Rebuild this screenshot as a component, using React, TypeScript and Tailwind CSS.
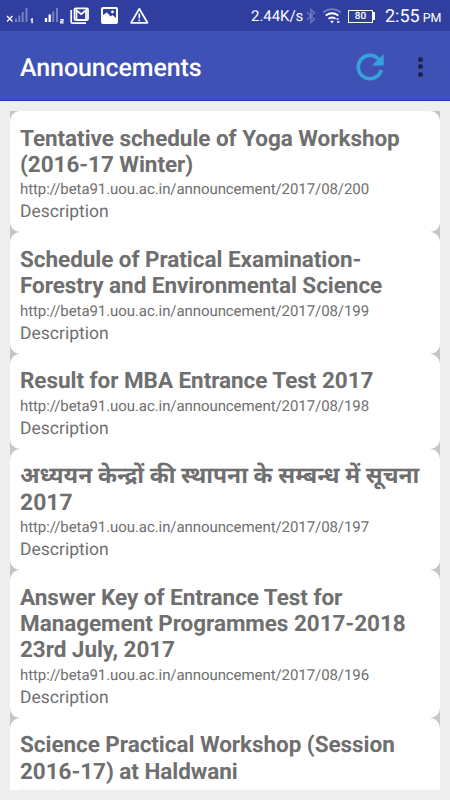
const announcements = [
  { id: 200, lines: ['Tentative schedule of Yoga Workshop', '(2016-17 Winter)'] },
  { id: 199, lines: ['Schedule of Pratical Examination-', 'Forestry and Environmental Science'] },
  { id: 198, lines: ['Result for MBA Entrance Test 2017'] },
  { id: 197, hindi: true, lines: ['अध्ययन केन्द्रों की स्थापना के सम्बन्ध में सूचना', '2017'] },
  { id: 196, lines: ['Answer Key of Entrance Test for', 'Management Programmes 2017-2018', '23rd July, 2017'] },
  { id: 195, lines: ['Science Practical Workshop (Session', '2016-17) at Haldwani'] },
]

function StatusIcons() {
  return (
    <svg width="150" height="31" viewBox="0 0 150 31" fill="none">
      <path d="M7 16l5.500 5.500M12.500 16L7 21.500" stroke="#fff" strokeWidth="1.300" />
      <path d="M16 18.500v3.500M19.300 15.500v6.500M22.700 12v10M26.500 8v14" stroke="#7680c3" strokeWidth="2" />
      <path d="M30.800 19.800l1.300-.8v4.200" stroke="#fff" strokeWidth="1.400" />
      <path d="M46 18v4M49.700 14.500v7.500" stroke="#fff" strokeWidth="2.300" />
      <path d="M53.200 11.500v10.500M57 8v14" stroke="#7680c3" strokeWidth="2" />
      <path d="M60.300 19.500h2.700v1.600h-2.300v1.700h2.900" stroke="#fff" strokeWidth="1.200" />
      <rect x="74.500" y="8.300" width="13.500" height="11.700" rx="1.200" stroke="#fff" strokeWidth="1.800" />
      <path d="M75.500 9.500l5.700 4.700 5.800-4.700M76.500 9.500v10M86 9.500v10" stroke="#fff" strokeWidth="1.700" />
      <path d="M71.200 10v12q0 1.200 1.200 1.200H86" stroke="#fff" strokeWidth="1.700" />
      <path fillRule="evenodd" d="M103 7h13q2 0 2 2v13q0 2-2 2h-13q-2 0-2-2V9q0-2 2-2zm0 11v-3l4-2.500 3.500 4 2-1.500 3.500 3V9h-13zM112.500 10.500a1.400 1.400 0 1 1 0 2.800 1.400 1.400 0 0 1 0-2.800z" fill="#fff" />
      <path d="M139.300 8.800l8.200 14h-16.400z" stroke="#fff" strokeWidth="1.700" strokeLinejoin="round" />
      <path d="M139.300 13.500v4.800M139.300 19.500v1.700" stroke="#fff" strokeWidth="1.600" />
    </svg>
  )
}

function Bluetooth() {
  return (
    <svg width="10" height="16" viewBox="0 0 10 16" fill="none" stroke="#6c78bf" strokeWidth="1.400" className="ml-[4px]">
      <path d="M1 4.200l7.400 7L5 14.500v-13l3.400 3.300L1 11.800" />
    </svg>
  )
}

function Wifi() {
  return (
    <svg width="20" height="16" viewBox="0 0 20 16" fill="none" className="ml-[6px]">
      <path d="M1 4.200q9-6 18 0" stroke="#7680c3" strokeWidth="1.800" />
      <path d="M3.700 7.500q6.300-4.500 12.600 0M6.500 10.800q3.500-2.600 7 0" stroke="#fff" strokeWidth="1.900" />
      <path d="M8.200 13.200q1.800-1.400 3.600 0L10 15.200z" fill="#fff" />
      <path d="M14.500 11h2M15 14h2.500" stroke="#fff" strokeWidth="1.500" />
    </svg>
  )
}

function Battery() {
  return (
    <div className="ml-[6px] flex items-center">
      <div className="flex h-[13px] w-[25px] items-center justify-center border border-white pt-px text-[10px] leading-none font-medium">80</div>
      <div className="h-[8px] w-[2px] bg-white" />
    </div>
  )
}

function StatusBar() {
  return (
    <div className="flex h-[31px] items-center bg-[#303f9f] text-white">
      <StatusIcons />
      <div className="ml-[101px] flex h-full items-center pt-px">
        <span className="w-[51px] text-[15px] tracking-[-0.05px] whitespace-nowrap">2.44K/s</span>
        <Bluetooth />
        <Wifi />
        <Battery />
        <div className="ml-[10px] flex items-baseline gap-[3px] whitespace-nowrap">
          <span className="text-[18px]">2:55</span>
          <span className="text-[12.500px]">PM</span>
        </div>
      </div>
    </div>
  )
}

function AppBar() {
  return (
    <header className="flex h-[70px] items-center border-b border-[#1a37b4] bg-[#3f51b5] pt-[2px] pl-5">
      <h1 className="w-[336px] pt-[3px] text-[25px] leading-none font-medium tracking-[-0.1px] text-white">Announcements</h1>
      <svg width="28" height="28" viewBox="0 0 28 28" fill="none">
        <path d="M22.500 6A11.700 11.700 0 1 0 25.300 17" stroke="#36a3db" strokeWidth="3.600" />
        <path d="M27.700 1v11.500H16z" fill="#36a3db" />
      </svg>
      <div className="ml-[33.500px] flex flex-col gap-[2.500px]">
        <div className="h-[5px] w-[5px] rounded-full bg-[#1c2451]" />
        <div className="h-[5px] w-[5px] rounded-full bg-[#1c2451]" />
        <div className="h-[5px] w-[5px] rounded-full bg-[#1c2451]" />
      </div>
    </header>
  )
}

export default function App() {
  return (
    <div className="flex h-[800px] w-[450px] flex-col overflow-hidden bg-[#eeeeee] font-['Roboto','Noto_Sans_Devanagari','Noto_Sans',sans-serif] [text-rendering:geometricPrecision]">
      <StatusBar />
      <AppBar />
      <main className="mx-2.5 mt-2.5 mb-2.5 min-h-0 flex-1 overflow-hidden bg-[#c6c6c6]">
        {announcements.map((item) => (
          <article key={item.id} className="rounded-[10px] bg-white px-2.5 pt-[14.500px] pb-[9.500px] text-[#6f6f6f]">
            <h2 className={item.hindi ? 'text-[22.900px] leading-[26.370px] font-bold' : 'text-[22.500px] leading-[26.370px] font-bold tracking-[-0.05px]'}>
              {item.lines.map((line) => (
                <span key={line} className="block h-[26.370px] whitespace-nowrap">{line}</span>
              ))}
            </h2>
            <p className="mt-[3.100px] text-[15px] leading-[17.580px] tracking-[-0.075px]">http://beta91.uou.ac.in/announcement/2017/08/{item.id}</p>
            <p className="mt-[3.500px] text-[17.500px] leading-[20.500px]">Description</p>
          </article>
        ))}
      </main>
    </div>
  )
}
